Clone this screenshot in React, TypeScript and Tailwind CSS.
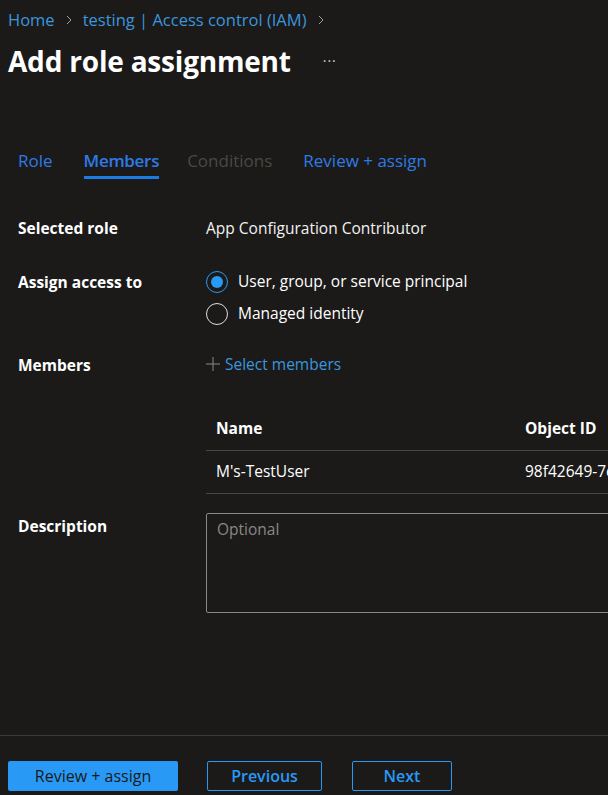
import React from "react";

export default function App() {
  const font = { fontFamily: '"Segoe UI", "Open Sans", "Noto Sans", sans-serif' };
  return (
    <div className="w-[608px] h-[795px] bg-[#1b1a19] text-white overflow-hidden flex flex-col" style={font}>
      {/* breadcrumb */}
      <div className="flex items-center px-2 pt-[8px] h-[32px] text-[16.5px] text-[#3a96dd] gap-[9px]">
        <span>Home</span>
        <svg width="10" height="12" viewBox="0 0 10 12"><path d="M3 2l4 4-4 4" stroke="#a19f9d" fill="none" strokeWidth="1"/></svg>
        <span>testing | Access control (IAM)</span>
        <svg width="10" height="12" viewBox="0 0 10 12"><path d="M3 2l4 4-4 4" stroke="#a19f9d" fill="none" strokeWidth="1"/></svg>
      </div>
      {/* title */}
      <div className="flex items-center px-2 h-[56px] mt-[1px]">
        <h1 className="text-[28px] font-bold tracking-[-0.2px]">Add role assignment</h1>
        <span className="ml-[32px] text-[14px] text-[#d2d0ce] tracking-[1px] mt-[-2px]">···</span>
      </div>
      {/* tabs */}
      <div className="flex items-end px-[18px] mt-[44px] text-[17px] h-[46px]">
        <div className="pb-[6px] text-[#2f7ae5] mr-[31px]">Role</div>
        <div className="pb-[3px] text-[#2f7ae5] font-semibold border-b-[3px] border-[#1a7be0] mr-[28px] tracking-[-0.3px]">Members</div>
        <div className="pb-[6px] text-[#4a4846] mr-[31px]">Conditions</div>
        <div className="pb-[6px] text-[#2f7ae5]">Review + assign</div>
      </div>
      {/* form */}
      <div className="grid grid-cols-[188px_1fr] pl-[18px] mt-[37px] text-[15.5px]">
        <div className="font-bold h-[24px] leading-[24px]">Selected role</div>
        <div className="h-[24px] leading-[24px] text-[#f3f2f1]">App Configuration Contributor</div>

        <div className="font-bold mt-[30px] h-[24px] leading-[24px]">Assign access to</div>
        <div className="mt-[30px] flex flex-col gap-[8px]">
          <div className="flex items-center gap-[10px] h-[24px]">
            <span className="w-[22px] h-[22px] rounded-full border-[1.5px] border-[#2899f5] flex items-center justify-center">
              <span className="w-[12px] h-[12px] rounded-full bg-[#2899f5]" />
            </span>
            <span>User, group, or service principal</span>
          </div>
          <div className="flex items-center gap-[10px] h-[24px]">
            <span className="w-[22px] h-[22px] rounded-full border-[1.5px] border-[#e1dfdd]" />
            <span>Managed identity</span>
          </div>
        </div>

        <div className="font-bold mt-[27px] h-[24px] leading-[24px]">Members</div>
        <div className="mt-[27px] flex items-center h-[24px] text-[#3a96dd]">
          <svg width="14" height="14" viewBox="0 0 14 14" className="mr-[5px] mt-[-3px]"><path d="M7 0v14M0 7h14" stroke="#8a8886" strokeWidth="1"/></svg>
          <span>Select members</span>
        </div>

        <div />
        <div className="mt-[30px] mr-[-20px]">
          <div className="flex h-[44px] items-center border-b border-[#484644] font-bold whitespace-nowrap">
            <div className="w-[319px] pl-[10px]">Name</div>
            <div>Object ID</div>
          </div>
          <div className="flex h-[43px] items-center border-b border-[#484644] whitespace-nowrap">
            <div className="w-[319px] pl-[10px]">M's-TestUser</div>
            <div>98f42649-7c</div>
          </div>
        </div>

        <div className="font-bold mt-[20px] h-[24px] leading-[24px]">Description</div>
        <div className="mt-[19px] mr-[-20px] h-[100px] border border-[#8a8886] rounded-[2px] px-[10px] pt-[4px] text-[#8a8886]">Optional</div>
      </div>
      <div className="flex-1" />
      {/* footer */}
      <div className="border-t border-[#3b3a39] h-[60px] flex items-start pt-[25px] px-2 text-[16px] font-semibold">
        <button className="w-[170px] h-[30px] bg-[#2899f5] text-[#1b1a19] rounded-[2px] font-normal" style={font}>Review + assign</button>
        <button className="ml-[29px] w-[115px] h-[30px] border border-[#2899f5] text-[#2899f5] rounded-[2px] font-semibold" style={font}>Previous</button>
        <button className="ml-[30px] w-[100px] h-[30px] border border-[#2899f5] text-[#2899f5] rounded-[2px] font-semibold" style={font}>Next</button>
      </div>
    </div>
  );
}
